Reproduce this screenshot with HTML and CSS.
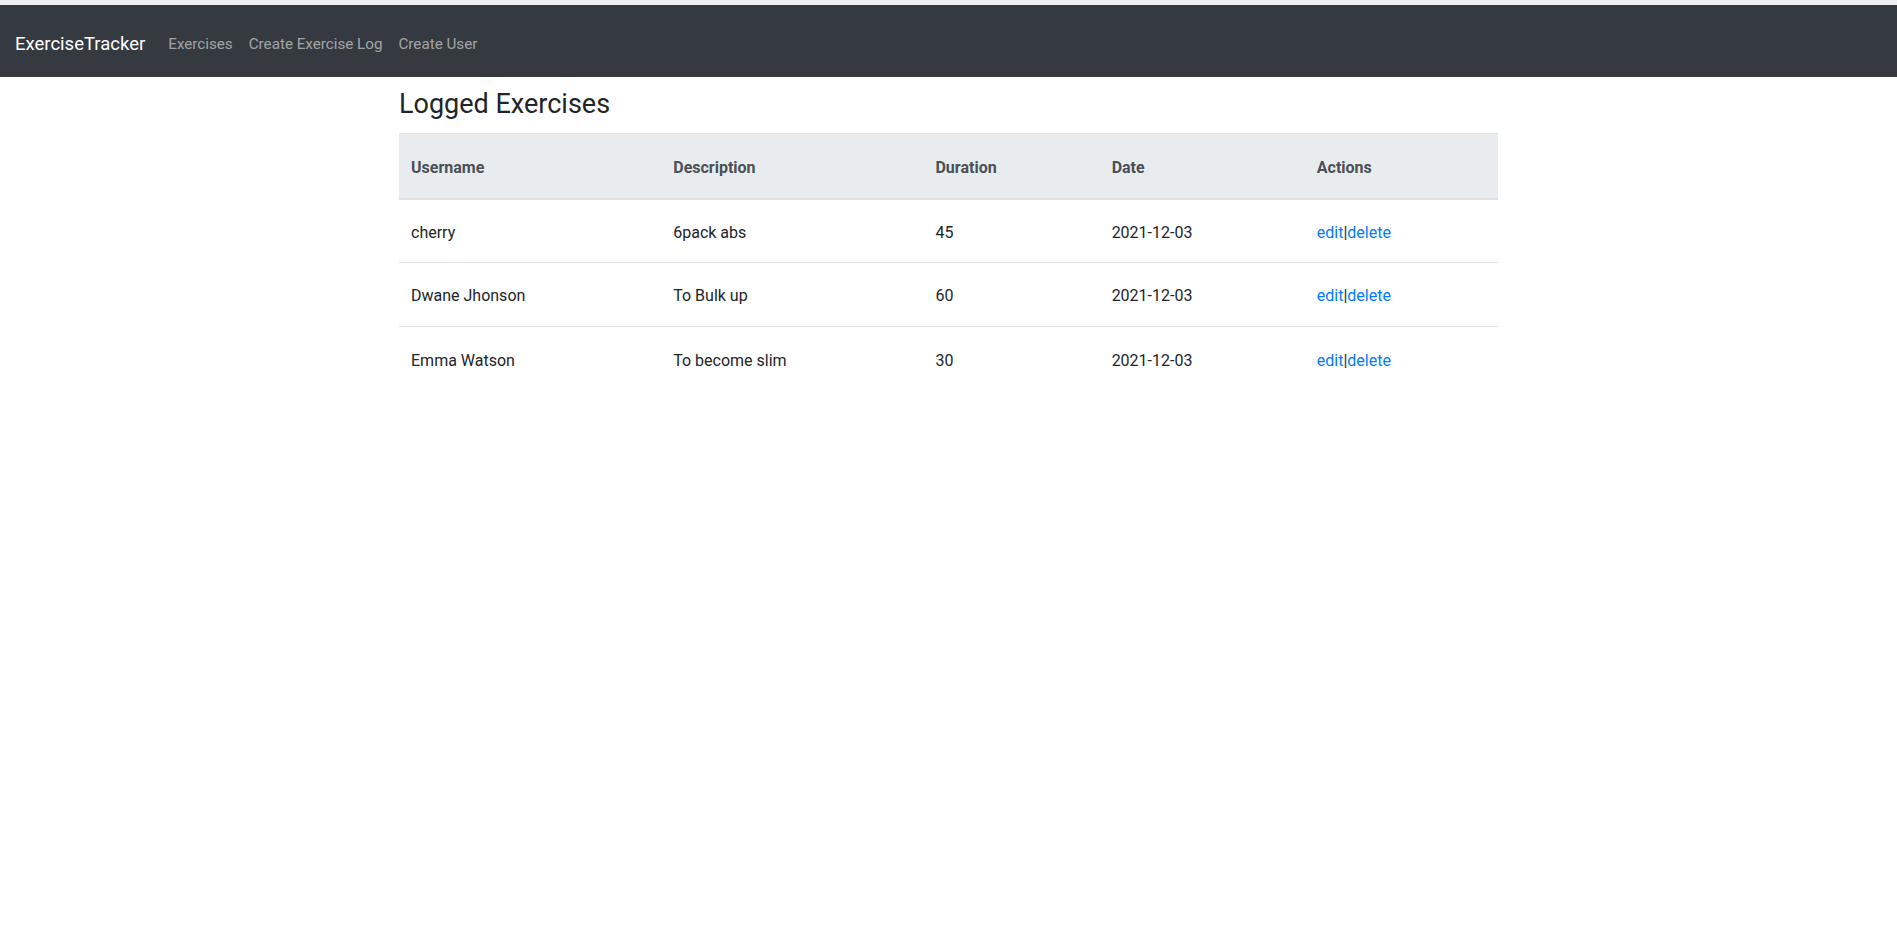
FILE: index.html
```html
<!DOCTYPE html>
<html lang="en">
<head>
<meta charset="utf-8">
<title>ExerciseTracker</title>
<link rel="stylesheet" href="styles.css">
</head>
<body>
<div class="topstrip"></div>
<nav class="navbar">
  <a class="brand" href="#">ExerciseTracker</a>
  <ul class="nav-links">
    <li><a href="#">Exercises</a></li>
    <li><a href="#">Create Exercise Log</a></li>
    <li><a href="#">Create User</a></li>
  </ul>
</nav>
<main class="container">
  <h3 class="title">Logged Exercises</h3>
  <table class="table">
    <colgroup>
      <col class="c1"><col class="c2"><col class="c3"><col class="c4"><col class="c5">
    </colgroup>
    <thead>
      <tr>
        <th>Username</th>
        <th>Description</th>
        <th>Duration</th>
        <th>Date</th>
        <th>Actions</th>
      </tr>
    </thead>
    <tbody>
      <tr>
        <td>cherry</td>
        <td>6pack abs</td>
        <td>45</td>
        <td>2021-12-03</td>
        <td><a href="#">edit</a>|<a href="#">delete</a></td>
      </tr>
      <tr>
        <td>Dwane Jhonson</td>
        <td>To Bulk up</td>
        <td>60</td>
        <td>2021-12-03</td>
        <td><a href="#">edit</a>|<a href="#">delete</a></td>
      </tr>
      <tr>
        <td>Emma Watson</td>
        <td>To become slim</td>
        <td>30</td>
        <td>2021-12-03</td>
        <td><a href="#">edit</a>|<a href="#">delete</a></td>
      </tr>
    </tbody>
  </table>
</main>
</body>
</html>
```
FILE: styles.css
```css
* { box-sizing: border-box; }
html, body { margin: 0; padding: 0; }
body {
  font-family: "Roboto", "Liberation Sans", sans-serif;
  color: #212529;
  background: #fff;
}
a { text-decoration: none; }

.topstrip { height: 5px; background: #efefef; }

.navbar {
  height: 72px;
  background: #343a40;
  display: flex;
  align-items: center;
  padding: 6px 0 0 15px;
}
.brand {
  color: #fff;
  font-size: 18.5px;
  margin-right: 15px;
}
.nav-links {
  display: flex;
  list-style: none;
  margin: 0;
  padding: 0;
}
.nav-links a {
  display: block;
  padding: 0 8px;
  font-size: 15.2px;
  color: rgba(255,255,255,.55);
}

.container {
  width: 1099px;
  margin: 0 auto;
}
.title {
  font-size: 27px;
  font-weight: 400;
  line-height: 1.2;
  margin: 11px 0 13px;
}
.table {
  width: 100%;
  border-collapse: collapse;
  font-size: 16px;
}
.c1 { width: 262px; }
.c2 { width: 262px; }
.c3 { width: 176px; }
.c4 { width: 205px; }
.c5 { width: 193px; }
.table th, .table td {
  text-align: left;
  padding: 0 12px;
  vertical-align: middle;
}
.table thead th {
  background: #e9ecef;
  color: #495057;
  font-weight: 700;
  height: 65px;
  padding-top: 2px;
  border-top: 1px solid #dee2e6;
  border-bottom: 2px solid #dee2e6;
}
.table td {
  height: 64px;
  padding-top: 2px;
  border-top: 1px solid #dee2e6;
}
.table td a { color: #007bff; }
```
